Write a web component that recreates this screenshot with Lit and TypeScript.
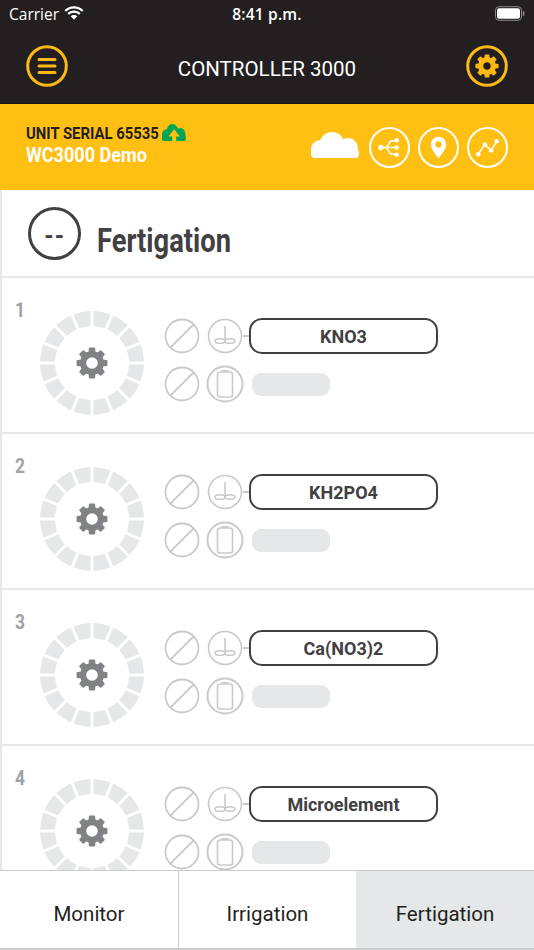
import { LitElement, html, css, svg } from "lit";
import { customElement } from "lit/decorators.js";

function gearPath(cx: number, cy: number, ro: number, rb: number, rh: number, teeth = 8) {
  const p: string[] = [];
  const step = (Math.PI * 2) / teeth;
  for (let i = 0; i < teeth; i++) {
    const a = i * step - Math.PI / 2;
    const pts: [number, number][] = [
      [rb, a - step * 0.3],
      [ro, a - step * 0.2],
      [ro, a + step * 0.2],
      [rb, a + step * 0.3],
    ];
    for (const [r, t] of pts) {
      p.push(`${p.length ? "L" : "M"}${(cx + r * Math.cos(t)).toFixed(2)} ${(cy + r * Math.sin(t)).toFixed(2)}`);
    }
  }
  p.push("Z");
  p.push(`M${cx + rh} ${cy}A${rh} ${rh} 0 1 0 ${cx - rh} ${cy}A${rh} ${rh} 0 1 0 ${cx + rh} ${cy}Z`);
  return p.join("");
}

function ringPaths(c: number, ro: number, ri: number, n = 16, gap = 3) {
  const out: string[] = [];
  const step = (Math.PI * 2) / n;
  for (let i = 0; i < n; i++) {
    const a0 = i * step + gap / 2 / ro;
    const a1 = (i + 1) * step - gap / 2 / ro;
    const b0 = i * step + gap / 2 / ri;
    const b1 = (i + 1) * step - gap / 2 / ri;
    const pt = (r: number, t: number) => `${(c + r * Math.cos(t)).toFixed(2)} ${(c + r * Math.sin(t)).toFixed(2)}`;
    out.push(`M${pt(ro, a0)}A${ro} ${ro} 0 0 1 ${pt(ro, a1)}L${pt(ri, b1)}A${ri} ${ri} 0 0 0 ${pt(ri, b0)}Z`);
  }
  return out.join("");
}

const RING = ringPaths(52, 52, 37);
const GEAR_GREY = gearPath(16, 16, 14.8, 11.2, 6.6);
const GEAR_Y = gearPath(16, 16, 14.8, 11.2, 5.8);

const FERT = ["KNO3", "KH2PO4", "Ca(NO3)2", "Microelement"];

@customElement("fert-row")
class FertRow extends LitElement {
  static properties = { index: { type: Number }, label: { type: String } };
  index = 1;
  label = "";
  static styles = css`
    :host { display: block; border-bottom: 2px solid #e6e7e8; height: 154px; flex: none; }
    .row { display: flex; height: 100%; box-sizing: border-box; padding-left: 13px; }
    .num {
      width: 25px; margin-top: 21px; height: 22px;
      font: 700 20.500px/22px Roboto, sans-serif; color: #a0a2a5;
      transform: scaleX(.85); transform-origin: left center;
    }
    .ring { flex: none; margin-top: 33px; width: 104px; height: 104px; position: relative; display: flex; align-items: center; justify-content: center; }
    .ring > svg.seg { position: absolute; inset: 0; }
    .ring > svg.gear { position: relative; }
    .cols { margin-left: 20px; margin-top: 40px; display: flex; flex-direction: column; gap: 12px; }
    .line { display: flex; align-items: center; height: 36px; }
    .ic { flex: none; display: block; overflow: visible; }
    .ic + .ic { margin-left: 7px; }
    .link { width: 6px; height: 2px; background: #c9cacc; flex: none; }
    .pill {
      flex: none; box-sizing: border-box; width: 189px; height: 36px; border: 2.500px solid #414042; border-radius: 13px;
      display: flex; align-items: center; justify-content: center; padding-top: 1px;
      font: 700 18px Roboto, sans-serif; color: #414042;
    }
    .blank { flex: none; width: 78px; height: 23px; border-radius: 9px; background: #e6e7e8; margin: 1px 0 0 9px; }
  `;
  render() {
    const no = html`<svg class="ic" width="36" height="36" viewBox="0 0 36 36" fill="none" stroke="#c9cacc" stroke-width="1.800">
      <circle cx="18" cy="18" r="16.500"></circle><path d="M6.500 29.500 29.500 6.500"></path></svg>`;
    return html`<div class="row">
      <div class="num">${this.index}</div>
      <div class="ring">
        <svg class="seg" width="104" height="104" viewBox="0 0 104 104"><path d=${RING} fill="#e6e7e8"></path></svg>
        <svg class="gear" width="32" height="32" viewBox="0 0 32 32"><path d=${GEAR_GREY} fill="#808285" fill-rule="evenodd" stroke="#808285" stroke-width="1.600" stroke-linejoin="round"></path></svg>
      </div>
      <div class="cols">
        <div class="line">
          ${no}
          <svg class="ic" width="36" height="36" viewBox="0 0 36 36" fill="none" stroke="#c9cacc" stroke-width="1.600">
            <circle cx="18" cy="18" r="16.500"></circle>
            <path d="M18 8v15"></path>
            <ellipse cx="13" cy="23" rx="5" ry="2.300"></ellipse>
            <ellipse cx="23" cy="23" rx="5" ry="2.300"></ellipse>
          </svg>
          <span class="link"></span>
          <div class="pill">${this.label}</div>
        </div>
        <div class="line">
          ${no}
          <svg class="ic" width="36" height="36" viewBox="0 0 36 36" fill="none" stroke="#c9cacc" stroke-width="2">
            <circle cx="18" cy="18" r="17.500"></circle>
            <rect x="10.500" y="6" width="15" height="25" rx="2.500" stroke-width="1.600"></rect>
            <path d="M14.500 4.800h7" stroke-width="1.600"></path>
          </svg>
          <div class="blank"></div>
        </div>
      </div>
    </div>`;
  }
}

@customElement("app-root")
class AppRoot extends LitElement {
  static styles = css`
    :host { display: block; width: 534px; height: 950px; overflow: hidden; background: #fff; font-family: Roboto, sans-serif; }
    .app { display: flex; flex-direction: column; height: 950px; }
    .top { background: #231f20; height: 103px; flex: none; display: flex; flex-direction: column; }
    .status { height: 28px; display: flex; align-items: center; justify-content: space-between; padding: 0 9px; color: #fff; position: relative; font: 400 15.500px "Open Sans", "Liberation Sans", sans-serif; }
    .carrier { display: flex; align-items: center; gap: 5px; }
    .time { position: absolute; left: 0; right: 0; text-align: center; font-weight: 600; font-size: 15.500px; letter-spacing: .2px; }
    .nav { display: flex; align-items: center; justify-content: space-between; padding: 0 26px; margin-top: 1px; height: 76px; }
    .title { color: #fff; font: 400 20.500px Roboto, sans-serif; padding-top: 6px; }
    .band { flex: none; height: 87px; background: #ffc013; display: flex; align-items: center; justify-content: space-between; padding: 0 26px; border-top: 1px solid #1a1a1a; box-sizing: border-box; }
    .id { display: flex; flex-direction: column; transform: scaleX(.86); transform-origin: left center; margin-top: -4px; }
    .serial { font: 700 17.300px/21px Roboto, sans-serif; color: #231f20; display: flex; align-items: center; white-space: nowrap; }
    .serial svg { margin-left: 4px; margin-top: -3px; width: 28px; height: 17px; }
    .name { font: 700 21px/23px Roboto, sans-serif; color: #fff; white-space: nowrap; }
    .tools { display: flex; align-items: center; gap: 8px; }
    .tools .cloud { margin: -4px 2px 0 0; }
    .content { flex: 1; min-height: 0; overflow: hidden; border-left: 2px solid #e6e7e8; display: flex; flex-direction: column; }
    .head { flex: none; height: 86px; display: flex; align-items: center; gap: 16px; padding-left: 26px; border-bottom: 2px solid #e6e7e8; }
    .head h1 { margin: 15px 0 0; font: 700 32.500px Roboto, sans-serif; color: #414042; transform: scaleX(.84); transform-origin: left center; white-space: nowrap; }
    .badge { width: 53px; height: 53px; box-sizing: border-box; border: 3px solid #414042; border-radius: 50%; padding-top: 4px; display: flex; align-items: center; justify-content: center; font: 900 22px Roboto, sans-serif; letter-spacing: .5px; color: #414042; flex: none; }
    .tabs { flex: none; height: 80px; box-sizing: border-box; display: grid; grid-template-columns: 179px 177px 178px; border-top: 1.500px solid #c9cacc; border-bottom: 2px solid #c9cacc; background: #fff; }
    .tab { display: flex; align-items: center; justify-content: center; padding-top: 8px; font: 400 20.500px Roboto, sans-serif; color: #231f20; }
    .tab.m { border-right: 1.500px solid #c9cacc; }
    .tab.on { background: #e6e7e8; }
  `;
  render() {
    const cloud = (fill: string) => svg`<circle cx="21" cy="12.500" r="12.500" fill=${fill}></circle><circle cx="9" cy="17" r="9" fill=${fill}></circle><circle cx="37" cy="16" r="10" fill=${fill}></circle><rect x="0" y="17" width="48" height="9" rx="4" fill=${fill}></rect>`;
    return html`<div class="app">
      <div class="top">
        <div class="status">
          <span class="carrier">Carrier
            <svg width="20" height="15" viewBox="0 0 20 15" fill="#fff"><path d="M10 2.500c3 0 5.800 1.200 8 3.300l1.500-1.600C17 1.700 13.600.3 10 .3S3 1.700.5 4.200L2 5.800c2.200-2.100 5-3.300 8-3.300Z"></path><path d="M10 6.800c1.900 0 3.700.7 5 2l1.600-1.600C14.800 5.500 12.500 4.500 10 4.500S5.200 5.500 3.400 7.200L5 8.800c1.300-1.300 3.100-2 5-2Z"></path><path d="M10 9c-1.300 0-2.400.5-3.300 1.300L10 13.700l3.300-3.400C12.400 9.500 11.300 9 10 9Z"></path></svg>
          </span>
          <span class="time">8:41 p.m.</span>
          <svg width="30" height="15" viewBox="0 0 30 15"><rect x=".5" y=".7" width="26" height="13.600" rx="3.500" fill="none" stroke="#8a8a8a"></rect><rect x="2" y="2.200" width="23" height="10.600" rx="2.200" fill="#fff"></rect><rect x="27.800" y="5" width="1.500" height="5" rx=".7" fill="#8a8a8a"></rect></svg>
        </div>
        <div class="nav">
          <svg width="42" height="42" viewBox="0 0 42 42" fill="none" stroke="#fdb913"><circle cx="21" cy="21" r="19.300" stroke-width="3"></circle><path d="M13 14.500h16M13 21h16M13 27.500h16" stroke-width="3" stroke-linecap="round"></path></svg>
          <span class="title">CONTROLLER 3000</span>
          <svg width="42" height="42" viewBox="0 0 42 42" fill="none" stroke="#fdb913"><circle cx="21" cy="21" r="19.300" stroke-width="3"></circle><svg x="9" y="9" width="24" height="24" viewBox="0 0 32 32"><path d=${GEAR_Y} fill="#fdb913" fill-rule="evenodd" stroke="#fdb913" stroke-width="1.600" stroke-linejoin="round"></path></svg></svg>
        </div>
      </div>
      <div class="band">
        <div class="id">
          <div class="serial">UNIT SERIAL 65535
            <svg viewBox="0 0 48 26" preserveAspectRatio="none">${cloud("#00a651")}<path d="M24.500 8 13 19h7.500v7h8v-7H36Z" fill="#ffc013"></path></svg>
          </div>
          <div class="name">WC3000 Demo</div>
        </div>
        <div class="tools">
          <svg class="cloud" width="48" height="26" viewBox="0 0 48 26">${cloud("#fff")}</svg>
          <svg width="41" height="41" viewBox="0 0 40 40" fill="none" stroke="#fff" stroke-width="1.500"><circle cx="20" cy="20" r="19" stroke-width="2"></circle><path d="M11 20h5M16 20c3 0 3-6.500 6.500-6.500H26M18 20h8M16 20c3 0 3 6.500 6.500 6.500H26"></path><g fill="#fff" stroke="none"><circle cx="11.500" cy="20" r="2.600"></circle><circle cx="27" cy="13" r="2.200"></circle><circle cx="27" cy="20" r="2.200"></circle><circle cx="27" cy="27" r="2.200"></circle></g></svg>
          <svg width="41" height="41" viewBox="0 0 40 40" fill="none"><circle cx="20" cy="20" r="19" stroke="#fff" stroke-width="2"></circle><path d="M20 31c-1.500-3-7.500-9-7.500-14a7.500 7.500 0 0 1 15 0c0 5-6 11-7.500 14Z" fill="#fff"></path><circle cx="20" cy="17" r="3" fill="#ffc013"></circle></svg>
          <svg width="41" height="41" viewBox="0 0 40 40" fill="none"><circle cx="20" cy="20" r="19" stroke="#fff" stroke-width="2"></circle><path d="M11 26.500 17.500 17 23.500 23 29 14" stroke="#fff" stroke-width="1.500"></path><g fill="#fff"><circle cx="11" cy="26.500" r="2.200"></circle><circle cx="17.500" cy="17" r="2.200"></circle><circle cx="23.500" cy="23" r="2.200"></circle><circle cx="29" cy="14" r="2.200"></circle></g></svg>
        </div>
      </div>
      <div class="content">
        <div class="head">
          <div class="badge">--</div>
          <h1>Fertigation</h1>
        </div>
        ${FERT.map((l, i) => html`<fert-row .index=${i + 1} .label=${l}></fert-row>`)}
      </div>
      <div class="tabs">
        <div class="tab m">Monitor</div>
        <div class="tab">Irrigation</div>
        <div class="tab on">Fertigation</div>
      </div>
    </div>`;
  }
}
